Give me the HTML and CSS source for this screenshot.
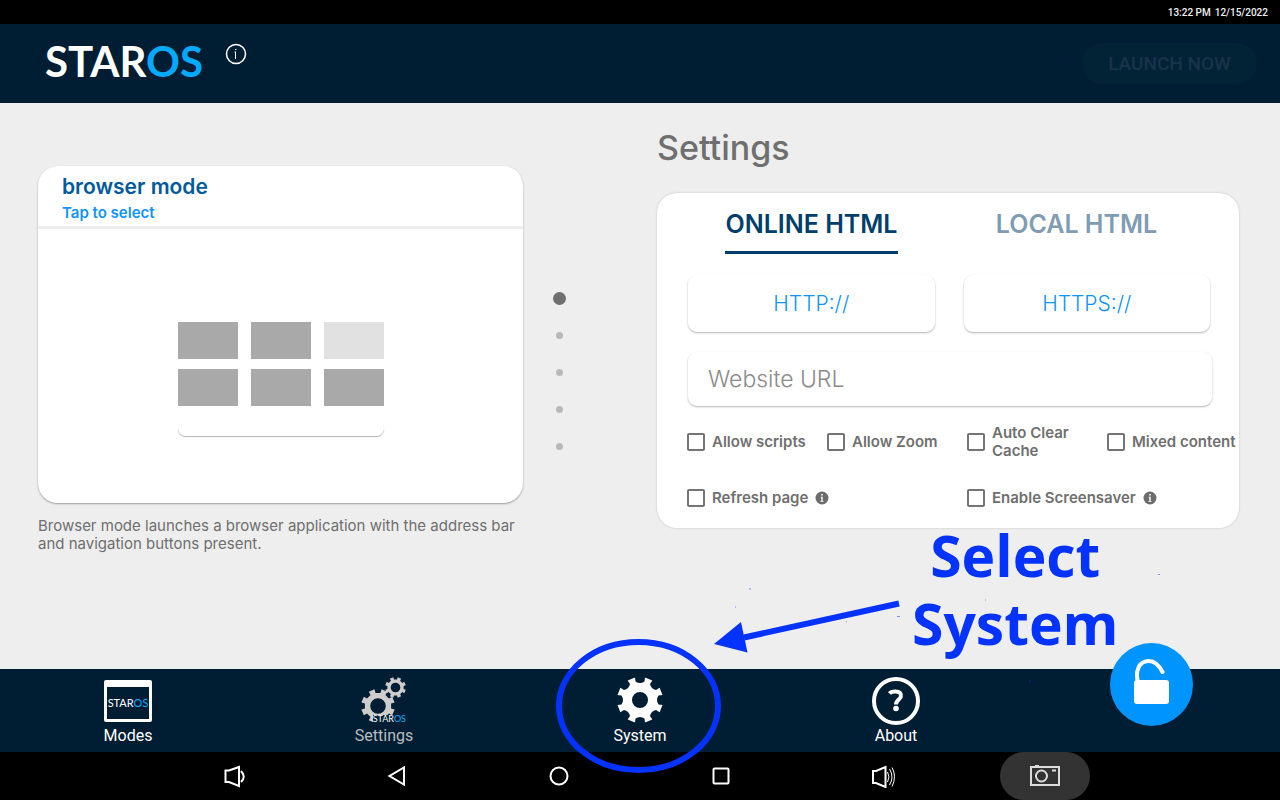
FILE: index.html
```html
<!DOCTYPE html>
<html lang="en">
<head>
<meta charset="utf-8">
<meta name="viewport" content="width=device-width, initial-scale=1">
<title>StarOS Settings</title>
<link rel="stylesheet" href="styles.css">
</head>
<body>
<svg class="defs" aria-hidden="true">
  <symbol id="gear" viewBox="-24 -24 48 48">
    <path fill-rule="evenodd" d="M-4.500 -18.500Q0 -15.500 4.500 -18.500L5 -22.500L12.300 -19.600L10 -16Q11 -11 16 -10L19.600 -12.300L22.500 -5L18.500 -4.500Q15.500 0 18.500 4.500L22.500 5L19.600 12.300L16 10Q11 11 10 16L12.300 19.600L5 22.500L4.500 18.500Q0 15.500 -4.500 18.500L-5 22.500L-12.300 19.600L-10 16Q-11 11 -16 10L-19.600 12.300L-22.500 5L-18.500 4.500Q-15.500 0 -18.500 -4.500L-22.500 -5L-19.600 -12.300L-16 -10Q-11 -11 -10 -16L-12.300 -19.600L-5 -22.500ZM8 0A8 8 0 1 0 -8 0A8 8 0 1 0 8 0Z"/>
  </symbol>
  <symbol id="gear-thin" viewBox="-24 -24 48 48">
    <path fill-rule="evenodd" d="M-3.500 -18.500L3.500 -18.500L5 -23.500L13 -20L10.500 -15.500L15.500 -10.500L20 -13L23.500 -5L18.500 -3.500L18.500 3.500L23.500 5L20 13L15.500 10.500L10.500 15.500L13 20L5 23.500L3.500 18.500L-3.500 18.500L-5 23.500L-13 20L-10.500 15.500L-15.500 10.500L-20 13L-23.500 5L-18.500 3.500L-18.500 -3.500L-23.500 -5L-20 -13L-15.500 -10.500L-10.500 -15.500L-13 -20L-5 -23.500ZM11 0A11 11 0 1 0 -11 0A11 11 0 1 0 11 0Z"/>
  </symbol>
  <symbol id="info" viewBox="0 0 14 14">
    <circle cx="7" cy="7" r="6.500" fill="#6c6c6c"/>
    <path d="M6.200 3h1.600v1.500H6.200zM5.700 5.700h2V10h.8v.7H5.500V10h.8V6.400h-.6z" fill="#fff"/>
  </symbol>
</svg>

<div class="status"><span>13:22 PM</span><span>12/15/2022</span></div>

<header class="header">
  <div class="logo">STAR<span class="logo-os">OS</span></div>
  <button class="info-button" aria-label="Information">
    <svg width="22" height="22" viewBox="0 0 22 22"><circle cx="11" cy="11" r="9.500" fill="none" stroke="#fff" stroke-width="1.500"/><path d="M10.500 9v7M9.500 9h1.500M10 6.500h1.500" stroke="#fff" stroke-width="1" fill="none"/></svg>
  </button>
  <button class="launch" disabled>LAUNCH NOW</button>
</header>

<main class="main">
  <section class="mode">
    <article class="mode-card">
      <div class="mode-head">
        <h2 class="mode-title">browser mode</h2>
        <p class="mode-hint">Tap to select</p>
      </div>
      <div class="preview">
        <div class="tiles"><i></i><i></i><i class="light"></i><i></i><i></i><i></i></div>
        <div class="preview-bar"></div>
      </div>
    </article>
    <p class="mode-text">Browser mode launches a browser application with the address bar and navigation buttons present.</p>
  </section>

  <div class="dots"><i class="current"></i><i></i><i></i><i></i><i></i></div>

  <section class="settings">
    <h1 class="settings-title">Settings</h1>
    <form class="panel">
      <div class="tabs">
        <button type="button" class="tab active">ONLINE HTML</button>
        <button type="button" class="tab">LOCAL HTML</button>
      </div>
      <div class="protocols">
        <button type="button" class="protocol">HTTP://</button>
        <button type="button" class="protocol">HTTPS://</button>
      </div>
      <input class="url" type="text" placeholder="Website URL" aria-label="Website URL">
      <div class="checks">
        <label class="check"><input type="checkbox"><span>Allow scripts</span></label>
        <label class="check"><input type="checkbox"><span>Allow Zoom</span></label>
        <label class="check"><input type="checkbox"><span>Auto Clear Cache</span></label>
        <label class="check nowrap"><input type="checkbox"><span>Mixed content</span></label>
        <label class="check wide"><input type="checkbox"><span>Refresh page</span><svg width="14" height="14"><use href="#info"/></svg></label>
        <label class="check wide"><input type="checkbox"><span>Enable Screensaver</span><svg width="14" height="14"><use href="#info"/></svg></label>
      </div>
    </form>
  </section>
</main>

<nav class="nav">
  <a class="nav-item" href="#modes">
    <span class="window-icon"><span class="mini-logo">STAR<span class="logo-os">OS</span></span></span>
    <span>Modes</span>
  </a>
  <a class="nav-item muted" href="#settings">
    <span class="gears-icon">
      <svg width="48" height="48" viewBox="0 0 48 48" fill="#cfcccc"><use href="#gear-thin" x="1" y="12" width="34" height="34"/><use href="#gear-thin" x="25" y="0" width="21" height="21"/></svg>
      <span class="mini-logo gears-logo">STAR<span class="logo-os">OS</span></span>
    </span>
    <span>Settings</span>
  </a>
  <a class="nav-item" href="#system">
    <svg width="48" height="48" fill="#fff"><use href="#gear" y="-1" width="48" height="48"/></svg>
    <span>System</span>
  </a>
  <a class="nav-item" href="#about">
    <svg width="48" height="48" viewBox="0 0 48 48" fill="none" stroke="#fff"><circle cx="24" cy="24" r="22" stroke-width="4"/><path d="M17.500 16.500C19.500 14 28.500 13 29 18.500C29.500 22.500 24 22.500 24 27.500" stroke-width="4"/><circle cx="24" cy="31.500" r="2.800" fill="#fff" stroke="none"/></svg>
    <span>About</span>
  </a>
  <div class="fab-slot">
    <button class="fab" aria-label="Unlock">
      <svg width="44" height="48" viewBox="0 0 44 48"><rect x="4" y="21" width="35" height="24" rx="3" fill="#fff"/><path d="M8 23C5 12 9 2.500 18 2C25 1.800 29 6 32.500 13" fill="none" stroke="#fff" stroke-width="4" stroke-linecap="round"/></svg>
    </button>
  </div>
</nav>

<footer class="system-bar">
  <button aria-label="Volume down"><svg width="24" height="24" viewBox="0 0 24 24"><path d="M2.500 6.500h3.500L16 3v19L6 18H2.500zM18 7q5.500 5.500 0 11"/></svg></button>
  <button aria-label="Back"><svg width="24" height="24" viewBox="0 0 24 24"><path d="M19 3.500v17L4.500 12z"/></svg></button>
  <button aria-label="Home"><svg width="24" height="24" viewBox="0 0 24 24"><circle cx="12" cy="12" r="8.500"/></svg></button>
  <button aria-label="Recent apps"><svg width="24" height="24" viewBox="0 0 24 24"><rect x="4.500" y="4.500" width="15" height="15" rx="1"/></svg></button>
  <button aria-label="Volume up"><svg width="26" height="24" viewBox="0 0 26 24"><path d="M3 7h3L15.500 3v20L6 19H3z"/><path class="waves" d="M17.500 8q3 5 0 10M19.500 5q5 8 0 16M22 3.500q5 9 0 19"/></svg></button>
  <button class="shot" aria-label="Screenshot"><svg width="32" height="24" viewBox="0 0 32 24"><path d="M2 3h28v18H2zM6 2h4M23 6.500h4"/><circle cx="12.500" cy="12" r="5.500"/></svg></button>
</footer>

<aside class="callout">
  <svg class="callout-art" width="660" height="220" viewBox="540 560 660 220" aria-hidden="true">
    <ellipse cx="638.500" cy="706" rx="79.500" ry="64" fill="none" stroke="#0433ff" stroke-width="6"/>
    <path d="M899 603.500L744 637.500" stroke="#0433ff" stroke-width="6"/>
    <path d="M714 644L741 622L747.500 652.500Z" fill="#0433ff"/>
    <path d="M749 589h2M735 607h1M846 622h1M897 616.500h3M985 600h1M1158 574.500h2M1029 681h2" stroke="#0433ff" opacity=".5"/>
  </svg>
  <p class="callout-text">Select<br>System</p>
</aside>
</body>
</html>
```

FILE: styles.css
```css
* { box-sizing: border-box; }
body {
  margin: 0;
  position: relative;
  min-height: 100vh;
  display: flex;
  flex-direction: column;
  background: #eee;
  font-family: Inter, "Noto Sans", sans-serif;
  color: #6f6f6f;
}
h1, h2, p { margin: 0; }
button { font: inherit; border: 0; background: none; padding: 0; cursor: pointer; }
svg { display: block; flex: none; }
.defs { position: absolute; width: 0; height: 0; }

.status {
  height: 24px;
  display: flex;
  align-items: center;
  justify-content: flex-end;
  gap: 4px;
  padding: 1px 12px 0 0;
  background: #000;
  color: #eee;
  font: 500 10px/24px Roboto, sans-serif;
}
.header {
  height: 79px;
  display: flex;
  align-items: center;
  padding: 0 23px 0 45px;
  background: #001e33;
}
.logo { padding-bottom: 6px; font: 700 42px/48px Lato, sans-serif; color: #fff; }
.logo-os { color: #00aaff; }
.info-button { margin: 0 auto 20px 22px; }
.launch {
  width: 175px;
  height: 41px;
  border-radius: 20px;
  background: #022236;
  color: #18334a;
  font: 500 19px/41px Roboto, sans-serif;
}

.main {
  flex: 1;
  display: grid;
  grid-template-columns: 485fr 134px 582fr;
  padding: 0 41px 0 38px;
}
.mode { padding-top: 63px; }
.mode-card {
  border-radius: 20px;
  background: #fff;
  box-shadow: 0 1px 2px rgba(0, 0, 0, .35);
}
.mode-head { height: 63px; padding: 8px 24px 0; border-bottom: 3px solid #eee; }
.mode-title { font-size: 21px; line-height: 26px; font-weight: 600; color: #005a9c; }
.mode-hint { font-size: 15px; line-height: 26px; font-weight: 600; color: #0d94ff; }
.preview { height: 274px; padding-top: 93px; display: flex; flex-direction: column; align-items: center; gap: 15px; }
.tiles { display: grid; grid-template-columns: repeat(3, 60px); grid-auto-rows: 37px; gap: 10px 13px; }
.tiles i { background: #a9a9a9; }
.tiles .light { background: #e1e1e1; }
.preview-bar { width: 206px; height: 15px; border-radius: 8px; box-shadow: 0 1px 1px rgba(0, 0, 0, .3); }
.mode-text { margin-top: 14px; font-size: 15px; line-height: 18px; font-weight: 400; }

.dots {
  display: flex;
  flex-direction: column;
  align-items: center;
  gap: 30px;
  width: 14px;
  margin-left: 29px;
  padding-top: 189px;
}
.dots i { width: 7px; height: 7px; border-radius: 50%; background: #b9b9b9; }
.dots .current { width: 13px; height: 13px; background: #6f6f6f; }
.dots .current + i { margin-top: -3px; }

.settings { padding-top: 22px; }
.settings-title { font-size: 34px; line-height: 46px; font-weight: 500; }
.panel {
  margin-top: 22px;
  height: 335px;
  padding: 8px 28px 0 30px;
  border-radius: 20px;
  background: #fff;
  box-shadow: 0 0 2px rgba(0, 0, 0, .22);
}
.tabs { display: grid; grid-template-columns: 1fr 1fr; justify-items: center; margin: 0 2px 0 -8px; }
.tab { height: 53px; padding-bottom: 4px; border-bottom: 3px solid transparent; font-size: 25px; font-weight: 600; color: #7f9cb3; }
.tab.active { border-color: #003e6b; color: #003e6b; }
.protocols { display: grid; grid-template-columns: 1fr 1fr; gap: 29px; margin: 21px 1px 0; }
.protocol, .url { border-radius: 9px; background: #fff; box-shadow: 0 1px 2px rgba(0, 0, 0, .3); }
.protocol { height: 57px; font-size: 21px; font-weight: 300; color: #0d94ff; }
.url {
  display: block;
  width: 100%;
  height: 54px;
  margin: 20px 0 0 1px;
  padding: 0 20px;
  border: 0;
  font-family: inherit;
  font-size: 23px;
  font-weight: 300;
  color: #6f6f6f;
}
.url::placeholder { color: #8b8b8b; opacity: 1; }
.checks {
  display: grid;
  grid-template-columns: 140fr 140fr 140fr 132fr;
  grid-auto-rows: 36px;
  row-gap: 20px;
  margin: 18px -28px 0 0;
}
.check { display: flex; align-items: center; gap: 7px; font-size: 15px; line-height: 18px; font-weight: 600; }
.check span { max-width: 100px; }
.nowrap, .wide { white-space: nowrap; }
.check.wide span { max-width: none; }
.wide { grid-column: span 2; }
.check input { appearance: none; flex: none; width: 18px; height: 18px; margin: 0; border: 2px solid #757575; border-radius: 2px; }
.check input:checked { background: #757575; }

.nav {
  height: 83px;
  display: grid;
  grid-template-columns: repeat(5, 1fr);
  background: #001e33;
}
.nav-item {
  display: flex;
  flex-direction: column;
  align-items: center;
  padding-top: 8px;
  color: #fff;
  text-decoration: none;
  font: 400 16px/22px Roboto, sans-serif;
}
.nav-item.muted { color: #b9bcc0; }
.window-icon {
  display: grid;
  place-items: center;
  width: 48px;
  height: 42px;
  margin: 3px 0;
  border: solid #fff;
  border-width: 7px 3px 3px;
  border-radius: 2px;
}
.mini-logo { font: 400 11px/14px Lato, sans-serif; color: #fff; }
.gears-icon { position: relative; }
.gears-logo { position: absolute; right: 2px; bottom: 2px; background: #001e33; font-size: 9px; line-height: 8px; }
.fab-slot { position: relative; }
.fab {
  position: absolute;
  top: -26px;
  left: calc(50% - 42px);
  width: 83px;
  height: 83px;
  display: grid;
  place-items: center;
  border-radius: 50%;
  background: #0094ff;
}
.fab svg { margin-bottom: 4px; }

.system-bar {
  height: 48px;
  display: grid;
  grid-template-columns: repeat(6, 1fr);
  padding: 0 12%;
  background: #000;
}
.system-bar button { display: grid; place-items: center; }
.system-bar svg { fill: none; stroke: #fff; stroke-width: 2; }
.system-bar .waves { stroke-width: 1; }
.system-bar .shot { justify-self: center; width: 90px; border-radius: 24px; background: #333; }
.system-bar .shot svg { stroke: #ddd; }

.callout { position: absolute; left: 540px; bottom: 20px; pointer-events: none; }
.callout-text {
  position: absolute;
  left: 372px;
  top: -39px;
  font: 700 57px/68px "Open Sans", sans-serif;
  color: #0433ff;
  text-align: center;
}
```
